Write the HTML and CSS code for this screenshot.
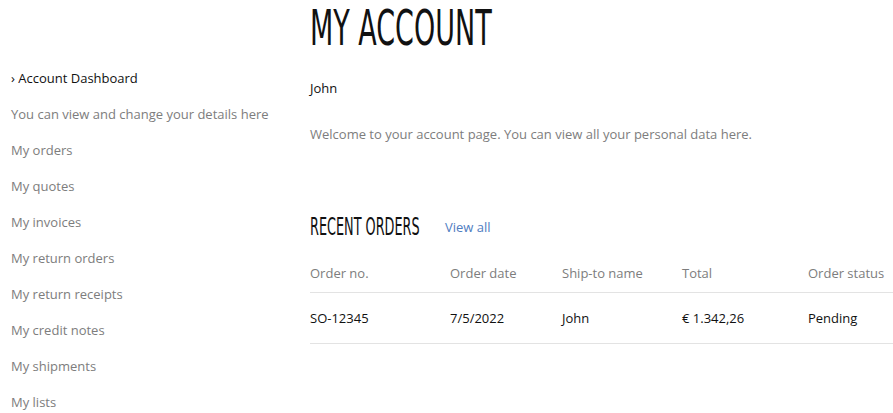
FILE: index.html
```html
<!DOCTYPE html>
<html>
<head>
<meta charset="utf-8">
<link rel="stylesheet" href="styles.css">
</head>
<body>
<div class="page">
  <nav class="sidebar">
    <ul class="menu">
      <li class="active">› Account Dashboard</li>
      <li>You can view and change your details here</li>
      <li>My orders</li>
      <li>My quotes</li>
      <li>My invoices</li>
      <li>My return orders</li>
      <li>My return receipts</li>
      <li>My credit notes</li>
      <li>My shipments</li>
      <li>My lists</li>
    </ul>
  </nav>
  <main class="main">
    <h1 class="title"><span>MY ACCOUNT</span></h1>
    <p class="name">John</p>
    <p class="welcome">Welcome to your account page. You can view all your personal data here.</p>
    <div class="orders-head">
      <h2 class="subtitle"><span>RECENT ORDERS</span></h2>
      <a class="view-all" href="#">View all</a>
    </div>
    <table class="orders">
      <thead>
        <tr><th class="c1">Order no.</th><th class="c2">Order date</th><th class="c3">Ship-to name</th><th class="c4">Total</th><th class="c5">Order status</th></tr>
      </thead>
      <tbody>
        <tr><td>SO-12345</td><td>7/5/2022</td><td>John</td><td>€ 1.342,26</td><td>Pending</td></tr>
      </tbody>
    </table>
  </main>
</div>
</body>
</html>
```
FILE: styles.css
```css
html, body {
  margin: 0;
  padding: 0;
  background: #fff;
}
body {
  font-family: "Open Sans", "Liberation Sans", sans-serif;
  font-size: 13px;
  color: #1a1a1a;
  overflow: hidden;
}
.page {
  display: flex;
  width: 893px;
}
.sidebar {
  width: 288px;
  flex: none;
  padding-left: 11px;
  padding-top: 60px;
}
.menu {
  list-style: none;
  margin: 0;
  padding: 0;
}
.menu li {
  line-height: 36px;
  height: 36px;
  color: #7d7d7d;
  white-space: nowrap;
}
.menu li.active {
  color: #111;
}
.main {
  flex: 1;
  padding-left: 11px;
  min-width: 0;
}
.title {
  margin: 0;
  height: 56px;
  font-family: "Liberation Sans Narrow", "DejaVu Sans Condensed", "Liberation Sans", sans-serif;
  font-weight: normal;
  font-size: 50px;
  line-height: 56px;
  color: #111;
  white-space: nowrap;
}
.title span {
  display: inline-block;
  transform: scaleX(0.6);
  transform-origin: left center;
}
.name {
  margin: 0;
  margin-top: 22px;
  line-height: 20px;
  color: #111;
}
.welcome {
  margin: 0;
  margin-top: 26px;
  line-height: 20px;
  color: #7d7d7d;
}
.orders-head {
  display: flex;
  align-items: center;
  margin-top: 68px;
  height: 30px;
}
.subtitle {
  margin: 0;
  width: 135px;
  font-family: "Liberation Sans Narrow", "DejaVu Sans Condensed", "Liberation Sans", sans-serif;
  font-weight: normal;
  font-size: 25px;
  line-height: 30px;
  color: #111;
  white-space: nowrap;
}
.subtitle span {
  display: inline-block;
  transform: scaleX(0.57);
  transform-origin: left center;
}
.view-all {
  color: #4f7dbf;
  text-decoration: none;
}
.orders {
  margin-top: 12px;
  width: 600px;
  border-collapse: collapse;
}
.orders th {
  font-weight: normal;
  color: #7d7d7d;
  text-align: left;
  height: 38px;
  padding: 0;
  border-bottom: 1px solid #e3e3e3;
  vertical-align: middle;
  white-space: nowrap;
}
.orders td {
  height: 50px;
  padding: 0;
  border-bottom: 1px solid #e3e3e3;
  color: #111;
  white-space: nowrap;
}
.c1 { width: 140px; }
.c2 { width: 112px; }
.c3 { width: 120px; }
.c4 { width: 126px; }
```
